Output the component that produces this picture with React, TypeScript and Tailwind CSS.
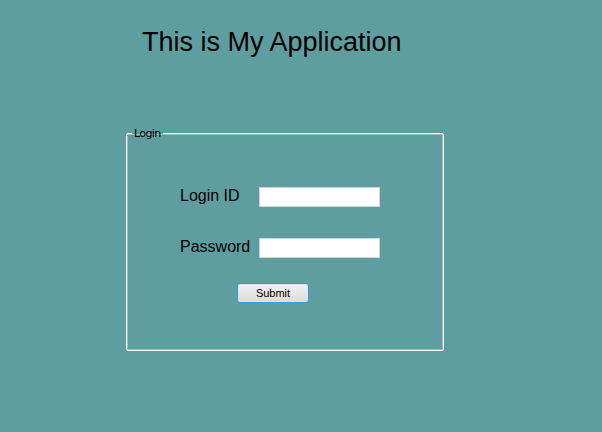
export default function App() {
  return (
    <div className="w-[602px] h-[432px] bg-[#5f9ea0] overflow-hidden font-['Liberation_Sans',Arial,sans-serif] text-black">
      {/* page heading */}
      <h1 className="pl-[142px] pt-[27px] text-[27px] leading-[30px]">This is My Application</h1>

      {/* login group box */}
      <fieldset className="ml-[126px] mt-[71px] w-[318px] h-[223px] border border-white rounded-[2px] shadow-[inset_0_0_0_1px_rgba(255,255,255,0.35)]">
        <legend className="ml-[5px] px-[2px] text-[11px] leading-[11px] font-['DejaVu_Sans',sans-serif] tracking-[-0.6px]">
          Login
        </legend>

        <div className="pl-[53px] pt-[48px] flex flex-col">
          <div className="flex items-center h-[20px]">
            <label className="w-[79px] text-[16px] leading-none -mt-[2px]">Login ID</label>
            <input className="w-[121px] h-[20px] bg-white border border-[#c9d6d8] outline-none" />
          </div>
          <div className="flex items-center h-[20px] mt-[31px]">
            <label className="w-[79px] text-[16px] leading-none -mt-[2px]">Password</label>
            <input type="password" className="w-[121px] h-[20px] bg-white border border-[#c9d6d8] outline-none" />
          </div>
          <button className="ml-[57px] mt-[25px] w-[72px] h-[20px] rounded-[3px] border border-[#3c9bd6] bg-gradient-to-b from-[#f2f2f2] to-[#dcdcdc] text-[11px] leading-none shadow-[inset_0_0_0_1px_#cfe8f7]">
            Submit
          </button>
        </div>
      </fieldset>
    </div>
  );
}
